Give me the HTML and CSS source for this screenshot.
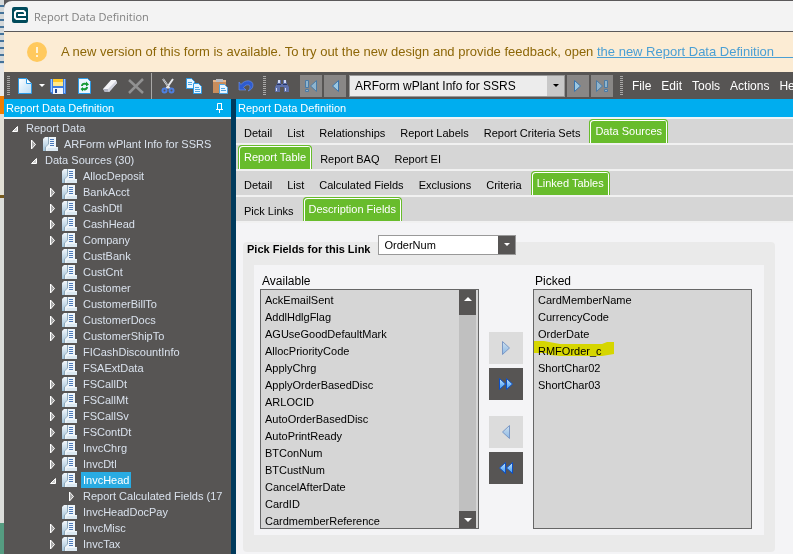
FILE: index.html
```
<!DOCTYPE html>
<html lang="en">

<head>
    <meta charset="UTF-8">
    <meta name="viewport" content="width=device-width, initial-scale=1.0">
    <title>Report Data Definition</title>
    <link rel="stylesheet" href="styles.css">
</head>

<body>
    <!-- shared icons -->
    <svg class="sprite" aria-hidden="true">
        <defs>
            <linearGradient id="paper" x1="0" y1="0" x2="1" y2="1">
                <stop offset="0" stop-color="#ffffff"/>
                <stop offset="1" stop-color="#b9dcf5"/>
            </linearGradient>
            <linearGradient id="folder" x1="0" y1="0" x2="0" y2="1">
                <stop offset="0" stop-color="#f2f7fb"/>
                <stop offset="1" stop-color="#9dc0d8"/>
            </linearGradient>
            <linearGradient id="blue" x1="0" y1="0" x2="0" y2="1">
                <stop offset="0" stop-color="#c4e6ff"/>
                <stop offset="1" stop-color="#3a95f0"/>
            </linearGradient>
        </defs>
        <symbol id="closed" viewBox="0 0 12 16">
            <path d="M1.500 4v9l4-4.500z" fill="#a8a8a8" stroke="#fff"/>
        </symbol>
        <symbol id="open" viewBox="0 0 12 16">
            <path d="M6.500 6.500v5H1.500z" fill="#ccc" stroke="#fff"/>
        </symbol>
        <symbol id="table" viewBox="0 0 16 16">
            <path d="M0 3l2-2h3v14H0z" fill="url(#folder)"/>
            <path d="M5 1h8v10h2v4H2v-4l3-3z" fill="#eef5fa"/>
            <path d="M5.500 1v7l-3 3v4" fill="none" stroke="#8fa9ba"/>
            <path d="M7 3.500h4M7 5.500h4M7 7.500h4M7 9.500h4" stroke="#4b78b8"/>
            <path d="M5 12h10v3H4z" fill="#dce9f2"/>
        </symbol>
        <symbol id="next" viewBox="0 0 16 16">
            <path d="M4.500 1.500v13l7-6.500z" fill="url(#blue)" stroke="#1a55b0"/>
        </symbol>
        <symbol id="prev" viewBox="0 0 16 16">
            <path d="M11.500 1.500v13L4.500 8z" fill="url(#blue)" stroke="#1a55b0"/>
        </symbol>
        <symbol id="all-next" viewBox="0 0 16 16">
            <path d="M1.500 2.500v11l6-5.500zM8.500 2.500v11l6-5.500z" fill="url(#blue)" stroke="#0d4fc4"/>
        </symbol>
        <symbol id="all-prev" viewBox="0 0 16 16">
            <path d="M7.500 2.500v11L1.500 8zM14.500 2.500v11L8.500 8z" fill="url(#blue)" stroke="#0d4fc4"/>
        </symbol>
    </svg>

    <div class="desktop">
        <div class="behind">
            <i class="behind-top"></i>
            <i class="behind-gray"></i>
            <i class="behind-orange"></i>
            <i class="behind-beige"></i>
            <i class="behind-line"></i>
            <i class="behind-light"></i>
            <i class="behind-green"></i>
        </div>

        <div class="window">
            <header class="titlebar">
                <svg class="logo" viewBox="0 0 16 16">
                    <rect width="16" height="16" rx="2" fill="#004b5c"/>
                    <path d="M14 12H4.500L3 10.500v-5L4.500 4h7L13 5.500V8H6" fill="none" stroke="#fff" stroke-width="2"/>
                </svg>
                <h1>Report Data Definition</h1>
            </header>

            <div class="banner">
                <svg class="warn" viewBox="0 0 20 20">
                    <circle cx="10" cy="10" r="10" fill="#ffc95e"/>
                    <path d="M10 5v6M10 13v2" stroke="#fff3d8" stroke-width="2"/>
                </svg>
                <p>A new version of this form is available. To try out the new design and provide feedback, open <a href="#">the new Report Data Definition&nbsp;&nbsp;&nbsp;&nbsp;&nbsp;&nbsp;</a></p>
            </div>

            <div class="toolbar">
                <span class="grip"></span>
                <button class="tool" type="button" aria-label="New">
                    <svg viewBox="0 0 16 16"><path d="M1.500.500h8l5 5v10h-13z" fill="url(#paper)" stroke="#2d9be6"/><path d="M9.500.500v5h5" fill="#fff" stroke="#2d9be6"/></svg>
                </button>
                <button class="drop" type="button" aria-label="New options">
                    <svg viewBox="0 0 8 4"><path d="M1 0h6L4 3z" fill="#fff"/></svg>
                </button>
                <button class="tool" type="button" aria-label="Save">
                    <svg viewBox="0 0 16 16"><path d="M0 1h16v15H2l-2-2z" fill="#3f7fe0"/><path d="M3 1h10v7H3z" fill="#ffe98a"/><path d="M3 1h10v3H3z" fill="#ffc928"/><path d="M1 1h1v13H1zM14 1h1v14h-1z" fill="#9cc7ff"/><path d="M3 10h10v6H3z" fill="#f2f6fb"/><path d="M5 11h2v4H5z" fill="#244a95"/></svg>
                </button>
                <button class="tool" type="button" aria-label="Refresh">
                    <svg viewBox="0 0 16 16"><path d="M2.500.500h9l3 3v12h-12z" fill="#eaf6ff" stroke="#2d9be6"/><path d="M5 8c0-3 3-4 5-3V3.500l3 3-3 2V7C8 6.500 7 7 7 8zM12 9c0 3-3 4-5 3v1.500L4.500 11 7 9v1c2 .5 3 0 3-1z" fill="#149a35"/></svg>
                </button>
                <button class="tool" type="button" aria-label="Clear">
                    <svg viewBox="0 0 16 16"><path d="M1 11l8-9h5l1 3-8 9H3z" fill="#f4f4f8"/><path d="M1 11l2 3h4l-1-3z" fill="#b3b5c2"/><path d="M6 11l8-8 1 2-8 9z" fill="#d1d3de"/></svg>
                </button>
                <button class="tool" type="button" aria-label="Delete" disabled>
                    <svg viewBox="0 0 16 16"><path d="M1 2l14 13M15 1L1 15" stroke="#919191" stroke-width="2.500"/></svg>
                </button>
                <span class="separator"></span>
                <button class="tool" type="button" aria-label="Cut">
                    <svg viewBox="0 0 16 16"><path d="M3 1l7 10M13 1L6 11" stroke="#e4e6ea" stroke-width="2"/><path d="M3 1l5 7" stroke="#8d9095"/><circle cx="4.500" cy="12.500" r="2" fill="none" stroke="#4d7fe0" stroke-width="2"/><circle cx="11.500" cy="12.500" r="2" fill="none" stroke="#4d7fe0" stroke-width="2"/></svg>
                </button>
                <button class="tool" type="button" aria-label="Copy">
                    <svg viewBox="0 0 16 16"><path d="M.5.500h5l3 3v7h-8z" fill="#e8f5ff" stroke="#2d9be6"/><path d="M2 4.500h4M2 6.500h4" stroke="#4da5e2"/><path d="M7.500 5.500h5l3 3v7h-8z" fill="#e8f5ff" stroke="#2d9be6"/><path d="M9 9.500h4M9 11.500h5M9 13.500h5" stroke="#4da5e2"/></svg>
                </button>
                <button class="tool" type="button" aria-label="Paste">
                    <svg viewBox="0 0 16 16"><path d="M1 2h13v13H1z" fill="#c88d5c"/><path d="M1 2h13v2H1z" fill="#e7b78d"/><path d="M4 1h7v3H4z" fill="#b9bbc0"/><path d="M7.500 6.500h5l3 3v6h-8z" fill="#e8f5ff" stroke="#4da5e2"/><path d="M9 10.500h4M9 12.500h5" stroke="#4da5e2"/></svg>
                </button>
                <button class="tool" type="button" aria-label="Undo">
                    <svg viewBox="0 0 16 16"><path d="M1 4v8h7L5.500 9.500C8 6 12 6 12 9c0 2-1 3-2 4 3-1 5-3 5-6 0-5-8-6-12-.5z" fill="#2e5bcf" stroke="#6d95ef" stroke-width=".6"/></svg>
                </button>
                <span class="grip grip-mid"></span>
                <button class="tool" type="button" aria-label="Search">
                    <svg viewBox="0 0 16 16"><path d="M4 2h3v4h2V2h3l1 4 2 3v5h-5V9H6v5H1V9l2-3z" fill="#5e70aa"/><path d="M4 2h2v3H4zM10 2h2v3h-2zM2 10h1v3H2zM11 10h1v3h-1z" fill="#d2daf4"/><path d="M3 6.500h4M9 6.500h4" stroke="#283666"/></svg>
                </button>
                <div class="record-nav">
                    <button class="step" type="button" aria-label="First record" disabled>
                        <svg viewBox="0 0 16 16"><path d="M2.500 2.500h3v7h-3zM2.500 11.500h3v2h-3zM13.500 2.500v11L7.500 8z" fill="#8fb4cd" stroke="#4a7ba6"/></svg>
                    </button>
                    <button class="step" type="button" aria-label="Previous record" disabled>
                        <svg viewBox="0 0 16 16"><path d="M11.500 2.500v11L5.500 8z" fill="#9cc8e2" stroke="#3974ac"/></svg>
                    </button>
                    <div class="combo record-combo">
                        <select aria-label="Report data definition">
                            <option>ARForm wPlant Info for SSRS</option>
                        </select>
                        <span class="combo-arrow"><svg viewBox="0 0 8 4"><path d="M1 0h6L4 3z"/></svg></span>
                    </div>
                    <button class="step" type="button" aria-label="Next record" disabled>
                        <svg viewBox="0 0 16 16"><path d="M4.500 2.500v11l6-5.500z" fill="#9cc8e2" stroke="#3974ac"/></svg>
                    </button>
                    <button class="step" type="button" aria-label="Last record" disabled>
                        <svg viewBox="0 0 16 16"><path d="M2.500 2.500v11l6-5.500zM10.500 2.500h3v7h-3zM10.500 11.500h3v2h-3z" fill="#8fb4cd" stroke="#4a7ba6"/></svg>
                    </button>
                </div>
                <span class="grip grip-menu"></span>
                <nav class="menu">
                    <a href="#">File</a>
                    <a href="#">Edit</a>
                    <a href="#">Tools</a>
                    <a href="#">Actions</a>
                    <a href="#">Help</a>
                </nav>
            </div>

            <div class="main">
                <aside class="side">
                    <div class="panel-title">
                        <h2>Report Data Definition</h2>
                        <button class="pin" type="button" aria-label="Pin panel">
                            <svg viewBox="0 0 8 10"><path d="M1.500 6V.500h4V6M0 6.500h7M3.500 7v3" fill="none" stroke="#fff"/><path d="M5 0h1v6H5z" fill="#fff"/></svg>
                        </button>
                    </div>
                    <ul class="tree">
                        <li>
                            <div class="node"><svg class="caret"><use href="#open"/></svg><span class="label">Report Data</span></div>
                            <ul>
                                <li><div class="node"><svg class="caret"><use href="#closed"/></svg><svg class="icon"><use href="#table"/></svg><span class="label">ARForm wPlant Info for SSRS</span></div></li>
                                <li>
                                    <div class="node"><svg class="caret"><use href="#open"/></svg><span class="label">Data Sources (30)</span></div>
                                    <ul>
                                        <li><div class="node"><svg class="caret"></svg><svg class="icon"><use href="#table"/></svg><span class="label">AllocDeposit</span></div></li>
                                        <li><div class="node"><svg class="caret"><use href="#closed"/></svg><svg class="icon"><use href="#table"/></svg><span class="label">BankAcct</span></div></li>
                                        <li><div class="node"><svg class="caret"><use href="#closed"/></svg><svg class="icon"><use href="#table"/></svg><span class="label">CashDtl</span></div></li>
                                        <li><div class="node"><svg class="caret"><use href="#closed"/></svg><svg class="icon"><use href="#table"/></svg><span class="label">CashHead</span></div></li>
                                        <li><div class="node"><svg class="caret"><use href="#closed"/></svg><svg class="icon"><use href="#table"/></svg><span class="label">Company</span></div></li>
                                        <li><div class="node"><svg class="caret"></svg><svg class="icon"><use href="#table"/></svg><span class="label">CustBank</span></div></li>
                                        <li><div class="node"><svg class="caret"></svg><svg class="icon"><use href="#table"/></svg><span class="label">CustCnt</span></div></li>
                                        <li><div class="node"><svg class="caret"><use href="#closed"/></svg><svg class="icon"><use href="#table"/></svg><span class="label">Customer</span></div></li>
                                        <li><div class="node"><svg class="caret"><use href="#closed"/></svg><svg class="icon"><use href="#table"/></svg><span class="label">CustomerBillTo</span></div></li>
                                        <li><div class="node"><svg class="caret"><use href="#closed"/></svg><svg class="icon"><use href="#table"/></svg><span class="label">CustomerDocs</span></div></li>
                                        <li><div class="node"><svg class="caret"><use href="#closed"/></svg><svg class="icon"><use href="#table"/></svg><span class="label">CustomerShipTo</span></div></li>
                                        <li><div class="node"><svg class="caret"></svg><svg class="icon"><use href="#table"/></svg><span class="label">FICashDiscountInfo</span></div></li>
                                        <li><div class="node"><svg class="caret"></svg><svg class="icon"><use href="#table"/></svg><span class="label">FSAExtData</span></div></li>
                                        <li><div class="node"><svg class="caret"><use href="#closed"/></svg><svg class="icon"><use href="#table"/></svg><span class="label">FSCallDt</span></div></li>
                                        <li><div class="node"><svg class="caret"><use href="#closed"/></svg><svg class="icon"><use href="#table"/></svg><span class="label">FSCallMt</span></div></li>
                                        <li><div class="node"><svg class="caret"><use href="#closed"/></svg><svg class="icon"><use href="#table"/></svg><span class="label">FSCallSv</span></div></li>
                                        <li><div class="node"><svg class="caret"><use href="#closed"/></svg><svg class="icon"><use href="#table"/></svg><span class="label">FSContDt</span></div></li>
                                        <li><div class="node"><svg class="caret"><use href="#closed"/></svg><svg class="icon"><use href="#table"/></svg><span class="label">InvcChrg</span></div></li>
                                        <li><div class="node"><svg class="caret"><use href="#closed"/></svg><svg class="icon"><use href="#table"/></svg><span class="label">InvcDtl</span></div></li>
                                        <li>
                                            <div class="node"><svg class="caret"><use href="#open"/></svg><svg class="icon"><use href="#table"/></svg><span class="label selected">InvcHead</span></div>
                                            <ul>
                                                <li><div class="node"><svg class="caret"><use href="#closed"/></svg><span class="label">Report Calculated Fields (17</span></div></li>
                                            </ul>
                                        </li>
                                        <li><div class="node"><svg class="caret"></svg><svg class="icon"><use href="#table"/></svg><span class="label">InvcHeadDocPay</span></div></li>
                                        <li><div class="node"><svg class="caret"><use href="#closed"/></svg><svg class="icon"><use href="#table"/></svg><span class="label">InvcMisc</span></div></li>
                                        <li><div class="node"><svg class="caret"><use href="#closed"/></svg><svg class="icon"><use href="#table"/></svg><span class="label">InvcTax</span></div></li>
                                    </ul>
                                </li>
                            </ul>
                        </li>
                    </ul>
                </aside>

                <section class="content">
                    <div class="panel-title">
                        <h2>Report Data Definition</h2>
                    </div>
                    <div class="tabs">
                        <button type="button">Detail</button>
                        <button type="button">List</button>
                        <button type="button">Relationships</button>
                        <button type="button">Report Labels</button>
                        <button type="button">Report Criteria Sets</button>
                        <button type="button" class="active">Data Sources</button>
                    </div>
                    <div class="tabs">
                        <button type="button" class="active">Report Table</button>
                        <button type="button">Report BAQ</button>
                        <button type="button">Report EI</button>
                    </div>
                    <div class="tabs">
                        <button type="button">Detail</button>
                        <button type="button">List</button>
                        <button type="button">Calculated Fields</button>
                        <button type="button">Exclusions</button>
                        <button type="button">Criteria</button>
                        <button type="button" class="active">Linked Tables</button>
                    </div>
                    <div class="tabs">
                        <button type="button">Pick Links</button>
                        <button type="button" class="active">Description Fields</button>
                    </div>

                    <div class="sheet">
                        <div class="group">
                            <div class="group-head">
                                <label for="link">Pick Fields for this Link</label>
                                <div class="combo link-combo">
                                    <select id="link">
                                        <option>OrderNum</option>
                                    </select>
                                    <span class="combo-arrow"><svg viewBox="0 0 8 4"><path d="M1 0h6L4 3z" fill="#fff"/></svg></span>
                                </div>
                            </div>
                            <div class="picker">
                                <div class="column">
                                    <label for="available">Available</label>
                                    <div class="listbox">
                                        <select id="available" size="14">
                                            <option>AckEmailSent</option>
                                            <option>AddlHdlgFlag</option>
                                            <option>AGUseGoodDefaultMark</option>
                                            <option>AllocPriorityCode</option>
                                            <option>ApplyChrg</option>
                                            <option>ApplyOrderBasedDisc</option>
                                            <option>ARLOCID</option>
                                            <option>AutoOrderBasedDisc</option>
                                            <option>AutoPrintReady</option>
                                            <option>BTConNum</option>
                                            <option>BTCustNum</option>
                                            <option>CancelAfterDate</option>
                                            <option>CardID</option>
                                            <option>CardmemberReference</option>
                                        </select>
                                        <div class="scroll">
                                            <span class="scroll-up"><svg viewBox="0 0 8 4"><path d="M0 4h8L4 0z" fill="#fff"/></svg></span>
                                            <span class="scroll-down"><svg viewBox="0 0 8 4"><path d="M0 0h8L4 4z" fill="#fff"/></svg></span>
                                        </div>
                                    </div>
                                </div>
                                <div class="moves">
                                    <button type="button" aria-label="Add" disabled><svg><use href="#next"/></svg></button>
                                    <button type="button" aria-label="Add all"><svg><use href="#all-next"/></svg></button>
                                    <button type="button" aria-label="Remove" class="apart" disabled><svg><use href="#prev"/></svg></button>
                                    <button type="button" aria-label="Remove all"><svg><use href="#all-prev"/></svg></button>
                                </div>
                                <div class="column">
                                    <label for="picked">Picked</label>
                                    <div class="listbox">
                                        <select id="picked" size="14">
                                            <option>CardMemberName</option>
                                            <option>CurrencyCode</option>
                                            <option>OrderDate</option>
                                            <option>RMFOrder_c</option>
                                            <option>ShortChar02</option>
                                            <option>ShortChar03</option>
                                        </select>
                                        <!-- marker stroke over the custom field -->
                                        <svg class="marker" viewBox="0 0 80 16"><path d="M0 0h10l16 3h42l5-2h7v12l-12 2H26l-10-1-4-2H0z" fill="#ffff00"/></svg>
                                    </div>
                                </div>
                            </div>
                        </div>
                    </div>
                </section>
            </div>
        </div>
    </div>
</body>

</html>
```
FILE: styles.css
```
* {
    box-sizing: border-box;
}

body {
    margin: 0;
    height: 100vh;
    overflow: hidden;
    font-family: "Liberation Sans", Arial, sans-serif;
    font-size: 11px;
    background-color: #5b595a;
}

h1, h2, p, ul {
    margin: 0;
    padding: 0;
    font-size: inherit;
    font-weight: normal;
}

button, select {
    margin: 0;
    padding: 0;
    border: 0;
    border-radius: 0;
    background: none;
    font: inherit;
    color: inherit;
}

svg {
    display: block;
    flex: none;
}

.sprite {
    position: absolute;
    width: 0;
    height: 0;
}

.desktop {
    display: flex;
    height: 100%;
}

/* sliver of the page behind the window */
.behind {
    display: flex;
    flex-direction: column;
    width: 4px;
    background-color: #d8d8d4;
}

.behind i {
    height: 64px;
}

.behind .behind-top {
    background: repeating-linear-gradient(#d5d9da 0 5px, #44739b 5px 7px);
}

.behind .behind-gray {
    height: 32px;
    background-color: #e8e8e8;
}

.behind .behind-orange {
    height: 18px;
    background-color: #ef7d00;
}

.behind .behind-beige {
    height: 81px;
    background-color: #e2e0d6;
}

.behind .behind-line {
    height: 3px;
    background-color: #765a1c;
}

.behind .behind-light {
    flex: 1;
    background-color: #dcdedb;
}

.behind .behind-green {
    height: 31px;
    background-color: #559c81;
}

.window {
    flex: 1;
    min-width: 0;
    display: flex;
    flex-direction: column;
    border-top: 1px solid #5b595a;
    border-radius: 8px 0 0 0;
    overflow: hidden;
}

.titlebar {
    display: flex;
    align-items: center;
    gap: 6px;
    height: 31px;
    padding: 0 8px 2px;
    background-color: #f3f3f3;
    border-bottom: 1px solid #5b595a;
}

.titlebar h1 {
    padding-top: 2px;
    font-family: "Open Sans", "Noto Sans", sans-serif;
    font-size: 11px;
    color: #808080;
}

.logo {
    width: 16px;
    height: 16px;
}

.banner {
    display: flex;
    align-items: center;
    gap: 14px;
    height: 40px;
    padding-left: 23px;
    background-color: #fcecd4;
    color: #8d6708;
    font-size: 13px;
    white-space: nowrap;
}

.banner p {
    padding-bottom: 2px;
}

.banner a {
    color: #4a9fd4;
}

.warn {
    width: 20px;
    height: 20px;
}

.toolbar {
    display: flex;
    align-items: center;
    height: 27px;
    background-color: #575554;
    color: #fff;
    font-size: 12px;
}

.tool {
    flex: none;
    display: flex;
    justify-content: center;
    width: 26px;
}

.tool svg, .step svg {
    width: 16px;
    height: 16px;
}

.drop {
    width: 7px;
}

.drop svg {
    width: 8px;
    height: 4px;
}

.grip {
    flex: none;
    width: 3px;
    height: 19px;
    margin: 0 2px 0 3px;
    background: repeating-linear-gradient(#a9a8a7 0 1px, transparent 1px 2px);
}

.grip-mid {
    margin: 0 3px 0 4px;
}

.grip-menu {
    margin: 0 9px 0 7px;
}

.separator {
    flex: none;
    width: 1px;
    height: 26px;
    margin: 0 3px 0 2px;
    background-color: #a9a8a7;
}

.record-nav {
    flex: none;
    display: flex;
    align-items: center;
    gap: 2px;
    margin-left: 5px;
}

.step {
    display: flex;
    align-items: center;
    justify-content: center;
    width: 22px;
    height: 22px;
    background-color: #898786;
}

.combo {
    display: flex;
    border: 1px solid #999;
}

.combo select {
    flex: 1;
    min-width: 0;
    padding-left: 5px;
    appearance: none;
    outline: none;
    color: #000;
}

.combo-arrow {
    display: flex;
    align-items: center;
    justify-content: center;
    width: 17px;
}

.combo-arrow svg {
    width: 8px;
    height: 4px;
}

.record-combo {
    width: 216px;
    height: 22px;
    margin-left: 1px;
    background-color: #ececec;
}

.record-combo .combo-arrow {
    background-color: #c8c8c8;
}

.menu {
    display: flex;
    gap: 10px;
}

.menu a {
    color: #fff;
    text-decoration: none;
}

.main {
    flex: 1;
    min-height: 0;
    display: flex;
}

.side {
    flex: none;
    width: 232px;
    background-color: #575554;
    border-right: 5px solid #003a5c;
    overflow: hidden;
}

.content {
    flex: 1;
    min-width: 0;
    display: flex;
    flex-direction: column;
    background-color: #f4f4f6;
}

.panel-title {
    display: flex;
    align-items: center;
    justify-content: space-between;
    height: 20px;
    padding: 0 7px 0 2px;
    background-color: #00adef;
    border-bottom: 2px solid #eef4f7;
    color: #fff;
}

.pin svg {
    width: 8px;
    height: 10px;
}

.tree {
    padding: 1px 0 0 7px;
    color: #d9e1ec;
    list-style: none;
}

.tree ul {
    padding-left: 19px;
    list-style: none;
}

.node {
    display: flex;
    height: 16px;
    line-height: 16px;
    white-space: nowrap;
}

.caret {
    width: 12px;
    height: 16px;
}

.icon {
    width: 16px;
    height: 16px;
    margin: 0 2px 0 1px;
}

.label {
    margin-left: 1px;
    padding: 0 2px;
}

.label.selected {
    background-color: #29abe2;
    color: #fff;
}

.tabs {
    display: flex;
    height: 26px;
    padding-left: 1px;
    background-color: #d6d6d6;
    border-bottom: 2px solid #f1f1f1;
}

.tabs button {
    padding: 4px 8px 0 7px;
    white-space: nowrap;
}

.tabs .active {
    margin: 0 1px;
    padding: 0 5px 2px;
    border: 1px solid #68bc2c;
    border-bottom: 0;
    border-radius: 4px 4px 0 0;
    background-color: #68bc2c;
    box-shadow: inset 1px 1px #fff, inset -1px 0 #fff;
    color: #fff;
}

.sheet {
    padding: 19px 18px 2px 7px;
}

.group {
    padding: 0 11px 17px;
    border-radius: 4px;
    background-color: #eaeaea;
}

.group-head {
    display: flex;
    gap: 8px;
    height: 23px;
    margin-left: -7px;
}

.group-head label {
    padding-top: 1px;
    font-weight: bold;
}

.link-combo {
    width: 138px;
    height: 20px;
    margin-top: -7px;
    background-color: #fff;
}

.link-combo .combo-arrow {
    background-color: #575554;
}

.picker {
    display: flex;
    gap: 10px;
    height: 270px;
    padding: 8px 12px 6px 6px;
    background-color: #f4f4f6;
}

.column {
    flex: 1;
    display: flex;
    flex-direction: column;
}

.column label {
    height: 16px;
    padding: 1px 2px 0;
    line-height: 15px;
    font-size: 12px;
}

.listbox {
    position: relative;
    display: flex;
    height: 240px;
    padding-right: 2px;
    border: 1px solid #666;
    background-color: #d6d6d6;
}

.listbox select {
    flex: 1;
    min-width: 0;
    height: 238px;
    overflow: hidden;
    outline: none;
    color: #000;
}

.listbox option {
    min-height: 17px;
    height: 17px;
    padding: 4px 4px 0;
}

.scroll {
    display: flex;
    flex-direction: column;
    justify-content: space-between;
    width: 17px;
    background-color: #c0c0c0;
}

.scroll span {
    display: flex;
    align-items: center;
    justify-content: center;
    height: 17px;
    background-color: #575554;
}

.scroll .scroll-up {
    height: 25px;
    padding-bottom: 7px;
}

.scroll svg {
    width: 8px;
    height: 4px;
}

.marker {
    position: absolute;
    top: 51px;
    left: 0;
    width: 80px;
    height: 16px;
    mix-blend-mode: multiply;
    pointer-events: none;
}

.moves {
    display: flex;
    flex-direction: column;
    gap: 4px;
    padding-top: 59px;
}

.moves button {
    display: flex;
    align-items: center;
    justify-content: center;
    width: 34px;
    height: 32px;
    background-color: #575554;
}

.moves button:disabled {
    background-color: #dcdcdc;
}

.moves button:disabled svg {
    opacity: .5;
}

.moves .apart {
    margin-top: 12px;
}

.moves svg {
    width: 16px;
    height: 16px;
}
```
